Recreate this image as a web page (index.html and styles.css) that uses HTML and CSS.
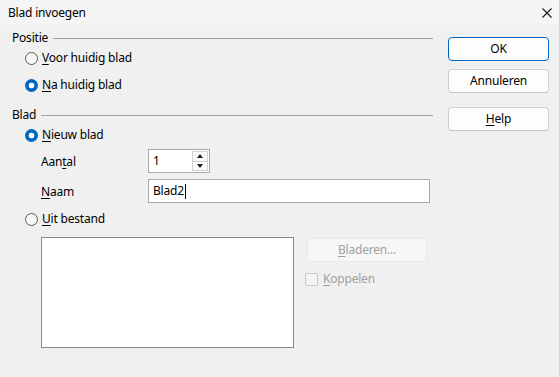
FILE: index.html
```html
<!DOCTYPE html>
<html lang="nl">
<head>
    <meta charset="UTF-8">
    <title>Blad invoegen</title>
    <link rel="stylesheet" href="styles.css">
</head>
<body>
    <div class="dialog">
        <div class="titlebar">
            <span class="title">Blad invoegen</span>
            <svg class="close" width="10" height="10" viewBox="0 0 10 10">
                <path d="M0.5 0.5 L9.5 9.5 M9.5 0.5 L0.5 9.5" stroke="#1a1a1a" stroke-width="1.1"/>
            </svg>
        </div>
        <div class="content">
            <div class="left">
                <div class="group-head"><span>Positie</span></div>
                <div class="radio-row first"><span class="radio"></span><span><u>V</u>oor huidig blad</span></div>
                <div class="radio-row second"><span class="radio checked"></span><span><u>N</u>a huidig blad</span></div>

                <div class="group-head blad"><span>Blad</span></div>
                <div class="radio-row first"><span class="radio checked"></span><span><u>N</u>ieuw blad</span></div>
                <div class="field-row aantal">
                    <span class="field-label">Aan<u>t</u>al</span>
                    <div class="spin">
                        <span class="spin-value">1</span>
                        <div class="spin-btns">
                            <span class="spin-up"></span>
                            <span class="spin-down"></span>
                        </div>
                    </div>
                </div>
                <div class="field-row naam">
                    <span class="field-label"><u>N</u>aam</span>
                    <div class="text-input">Blad2<span class="caret"></span></div>
                </div>
                <div class="radio-row file"><span class="radio"></span><span><u>U</u>it bestand</span></div>
                <div class="file-row">
                    <div class="file-list"></div>
                    <div class="file-side">
                        <div class="btn disabled"><u>B</u>laderen...</div>
                        <div class="check-row"><span class="checkbox"></span><span><u>K</u>oppelen</span></div>
                    </div>
                </div>
            </div>
            <div class="right">
                <div class="btn default">OK</div>
                <div class="btn cancel">Annuleren</div>
                <div class="btn help"><u>H</u>elp</div>
            </div>
        </div>
    </div>
</body>
</html>
```

FILE: styles.css
```css
body {
    margin: 0;
    font-family: "Segoe UI", "Noto Sans", sans-serif;
    font-size: 12px;
    letter-spacing: -0.2px;
    color: #000;
    background-color: #f0f0f0;
}
.dialog {
    width: 559px;
    height: 377px;
    background-color: #f0f0f0;
}
.titlebar {
    height: 25px;
    background-color: #f5f5f5;
    display: flex;
    align-items: center;
    justify-content: space-between;
    padding: 0 7px 0 8px;
    box-sizing: border-box;
}
.title {
    line-height: 16px;
}
.content {
    display: flex;
    padding: 5px 0 0 12px;
}
.left {
    width: 421px;
}
.right {
    margin-left: 15px;
    width: 101px;
    padding-top: 7px;
}
u {
    text-decoration-thickness: 1px;
    text-underline-offset: 2px;
}
.group-head {
    display: flex;
    align-items: center;
    height: 16px;
    line-height: 16px;
}
.group-head::after {
    content: "";
    flex: 1;
    border-top: 1px solid #a0a0a0;
    margin-left: 5px;
    margin-top: 1px;
}
.group-head.blad {
    margin-top: 14px;
}
.radio-row {
    display: flex;
    align-items: center;
    height: 16px;
    line-height: 16px;
    padding-left: 13px;
}
.radio-row.first {
    margin-top: 4px;
}
.radio-row.second {
    margin-top: 11px;
}
.radio-row.file {
    margin-top: 8px;
}
.radio {
    width: 11px;
    height: 11px;
    border: 1px solid #5a5a5a;
    border-radius: 50%;
    margin-right: 4px;
    background-color: #f7f7f7;
    flex: none;
}
.radio.checked {
    width: 13px;
    height: 13px;
    border: none;
    background: radial-gradient(circle, #fff 0 2.6px, #0067c0 3.2px);
}
.field-row {
    display: flex;
    align-items: center;
    height: 24px;
    padding-left: 29px;
}
.field-row.aantal {
    margin-top: 6px;
}
.field-row.naam {
    margin-top: 6px;
}
.field-label {
    width: 107px;
    padding-top: 1px;
}
.spin {
    width: 62px;
    height: 24px;
    box-sizing: border-box;
    border: 1px solid #a9a9a9;
    background-color: #fff;
    display: flex;
    justify-content: space-between;
}
.spin-value {
    padding-left: 4px;
    line-height: 22px;
}
.spin-btns {
    width: 16px;
    margin: 1px 1px 1px 0;
    border: 1px solid #d4d4d4;
    box-sizing: border-box;
    display: flex;
    flex-direction: column;
}
.spin-up, .spin-down {
    flex: 1;
    display: flex;
    align-items: center;
    justify-content: center;
    background-color: #fafafa;
}
.spin-up {
    border-bottom: 1px solid #d4d4d4;
}
.spin-up::before {
    content: "";
    border-left: 3px solid transparent;
    border-right: 3px solid transparent;
    border-bottom: 4px solid #202020;
}
.spin-down::before {
    content: "";
    border-left: 3px solid transparent;
    border-right: 3px solid transparent;
    border-top: 4px solid #202020;
}
.text-input {
    width: 282px;
    height: 24px;
    box-sizing: border-box;
    border: 1px solid #a9a9a9;
    background-color: #fff;
    padding-left: 4px;
    line-height: 22px;
    display: flex;
    align-items: center;
}
.caret {
    width: 1px;
    height: 15px;
    background-color: #000;
    margin-left: 1px;
}
.file-row {
    display: flex;
    margin-top: 10px;
    padding-left: 29px;
}
.file-list {
    width: 253px;
    height: 111px;
    box-sizing: border-box;
    border: 1px solid #868a8e;
    background-color: #fff;
}
.file-side {
    margin-left: 11px;
    padding-top: 1px;
}
.btn {
    height: 24px;
    box-sizing: border-box;
    border: 1px solid #d0d0d0;
    border-bottom-color: #c4c4c4;
    border-radius: 4px;
    background-color: #fdfdfd;
    display: flex;
    align-items: center;
    justify-content: center;
    line-height: 16px;
}
.btn.default {
    border: 1px solid #0067c0;
}
.btn.cancel {
    margin-top: 8px;
}
.btn.help {
    margin-top: 14px;
}
.btn.disabled {
    width: 120px;
    margin-left: 2px;
    color: #a0a0a0;
    border-color: #ebebeb;
    background-color: #f7f7f7;
}
.check-row {
    display: flex;
    align-items: center;
    margin-top: 9px;
    color: #a0a0a0;
    line-height: 16px;
}
.checkbox {
    width: 11px;
    height: 11px;
    border: 1px solid #c8c8c8;
    border-radius: 2px;
    background-color: #f5f5f5;
    margin-right: 5px;
}
```
